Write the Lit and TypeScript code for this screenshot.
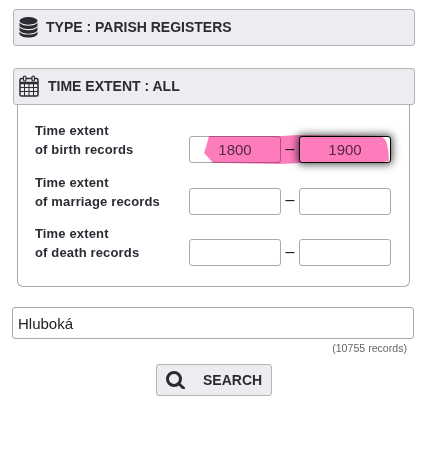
import { LitElement, css, html } from 'lit';
import { customElement } from 'lit/decorators.js';

const RECORD_ROWS = [
    { kind: 'birth', from: '1800', to: '1900' },
    { kind: 'marriage', from: '', to: '' },
    { kind: 'death', from: '', to: '' },
];

@customElement('app-root')
export class AppRoot extends LitElement {
    static styles = css`
        :host {
            display: block;
            width: 448px;
            height: 454px;
            overflow: hidden;
            background: #fff;
            color: #2b2b33;
            font-family: "Liberation Sans", Arial, sans-serif;
        }
        .page {
            display: flex;
            flex-direction: column;
            width: 402px;
            padding: 9px 0 0 13px;
        }
        .bar {
            display: flex;
            align-items: center;
            box-sizing: border-box;
            height: 37px;
            padding-bottom: 2px;
            border: 1px solid #b4b4b4;
            border-radius: 3px;
            background: #ecedf1;
            font-size: 14px;
            font-weight: bold;
        }
        .bar svg {
            flex: none;
            margin-left: 5px;
        }
        .bar svg.db {
            margin-right: 8px;
        }
        .bar svg.cal {
            margin-right: 9px;
        }
        .bar + .bar {
            margin-top: 22px;
        }
        .panel {
            display: flex;
            flex-direction: column;
            gap: 13.7px;
            box-sizing: border-box;
            width: 393px;
            height: 182px;
            margin-left: 4px;
            padding: 16px 17px 0;
            border: 1px solid #aaa;
            border-top: 0;
            border-radius: 0 0 6px 6px;
        }
        .row {
            position: relative;
            display: flex;
            align-items: flex-start;
            height: 38px;
        }
        .label {
            width: 154px;
            font-size: 13px;
            font-weight: bold;
            line-height: 19px;
            letter-spacing: 0.15px;
        }
        .range {
            display: flex;
            align-items: center;
            margin-top: 15px;
        }
        .range input {
            box-sizing: border-box;
            width: 92px;
            height: 27px;
            padding: 0;
            border: 1px solid #aaa;
            border-radius: 3px;
            outline: none;
            background: #fff;
            color: #555;
            font: 15px "Liberation Sans", Arial, sans-serif;
            text-align: center;
        }
        .range input.focused {
            border-color: #000;
            box-shadow: 0 0 8px 1px rgba(0, 0, 0, 0.75);
        }
        .dash {
            width: 18px;
            padding-bottom: 2px;
            text-align: center;
            color: #111;
            font-size: 16px;
        }
        .marker {
            position: absolute;
            left: 154px;
            top: 13px;
            mix-blend-mode: multiply;
            pointer-events: none;
        }
        .place {
            box-sizing: border-box;
            width: 402px;
            height: 32px;
            margin: 20px 0 0 -1px;
            padding: 0 5px;
            border: 1px solid #aaa;
            border-radius: 3px;
            outline: none;
            color: #222;
            font: 15px "Liberation Sans", Arial, sans-serif;
        }
        .count {
            margin: 3px 8px 0 0;
            color: #666;
            font-size: 10.6px;
            line-height: 13px;
            text-align: right;
        }
        .search {
            display: flex;
            align-items: center;
            box-sizing: border-box;
            width: 116px;
            height: 32px;
            margin: 9px 0 0 143px;
            padding: 0 0 0 9px;
            border: 1px solid #b4b4b4;
            border-radius: 3px;
            background: #ecedf1;
            color: #2b2b33;
            font: bold 14px "Liberation Sans", Arial, sans-serif;
        }
        .search svg {
            flex: none;
            margin-right: 18px;
        }
    `;

    renderDatabase() {
        return html`<svg class="db" width="19" height="22" viewBox="0 0 20 22" fill="#2b2b33">
            <ellipse cx="10" cy="4.5" rx="9.5" ry="4"/>
            <path d="M.5 6.600v2.600c0 2.200 4.300 4 9.500 4s9.500-1.800 9.500-4V6.600c-1.400 2-5.300 3-9.500 3S1.900 8.600.5 6.600z"/>
            <path d="M.5 11.300v2.700c0 2.200 4.300 4 9.500 4s9.500-1.800 9.500-4v-2.700c-1.400 2-5.300 3-9.500 3s-8.100-1-9.500-3z"/>
            <path d="M.5 16v2c0 2.200 4.300 4 9.500 4s9.500-1.800 9.500-4v-2c-1.400 2-5.300 3-9.500 3S1.900 18 .5 16z"/>
        </svg>`;
    }

    renderCalendar() {
        return html`<svg class="cal" width="20" height="22" viewBox="0 0 20 22" fill="none" stroke="#2b2b33">
            <rect x="1" y="3.500" width="18" height="17.500" rx="1.500" stroke-width="1.500"/>
            <path d="M1 8h18" stroke-width="2.500"/>
            <path d="M1 12.500h18M1 16.500h18M5.500 8v13M10 8v13M14.500 8v13" stroke-width="1"/>
            <rect x="4.500" y="1" width="2.500" height="5" rx="1.250" fill="#ecedf1" stroke-width="1.200"/>
            <rect x="13" y="1" width="2.500" height="5" rx="1.250" fill="#ecedf1" stroke-width="1.200"/>
        </svg>`;
    }

    renderSearch() {
        return html`<svg width="19" height="18" viewBox="0 0 19 18" fill="none" stroke="#2b2b33">
            <circle cx="8" cy="8" r="6.500" stroke-width="3"/>
            <path d="M12.500 12.500l5 4.500" stroke-width="3" stroke-linecap="round"/>
        </svg>`;
    }

    render() {
        return html`
            <div class="page">
                <div class="bar">${this.renderDatabase()}TYPE : PARISH REGISTERS</div>
                <div class="bar">${this.renderCalendar()}TIME EXTENT : ALL</div>
                <div class="panel">
                    ${RECORD_ROWS.map((row, i) => html`
                        <div class="row">
                            <div class="label">Time extent<br>of ${row.kind} records</div>
                            <div class="range">
                                <input .value=${row.from}>
                                <span class="dash">–</span>
                                <input class=${i === 0 ? 'focused' : ''} .value=${row.to}>
                            </div>
                            ${i === 0 ? html`
                                <svg class="marker" width="204" height="32" viewBox="0 0 204 32">
                                    <path fill="#ff7cbc" d="M20 2 L92 2 L110 1 L190 2 Q196 3 198 10 Q200 18 200 27 L190 29 L110 29 L92 30 L34 29 L24 29 Q20 24 15 19 L17 13 Z"/>
                                </svg>
                            ` : ''}
                        </div>
                    `)}
                </div>
                <input class="place" .value=${'Hluboká'}>
                <div class="count">(10755 records)</div>
                <button class="search">${this.renderSearch()}SEARCH</button>
            </div>
        `;
    }
}
